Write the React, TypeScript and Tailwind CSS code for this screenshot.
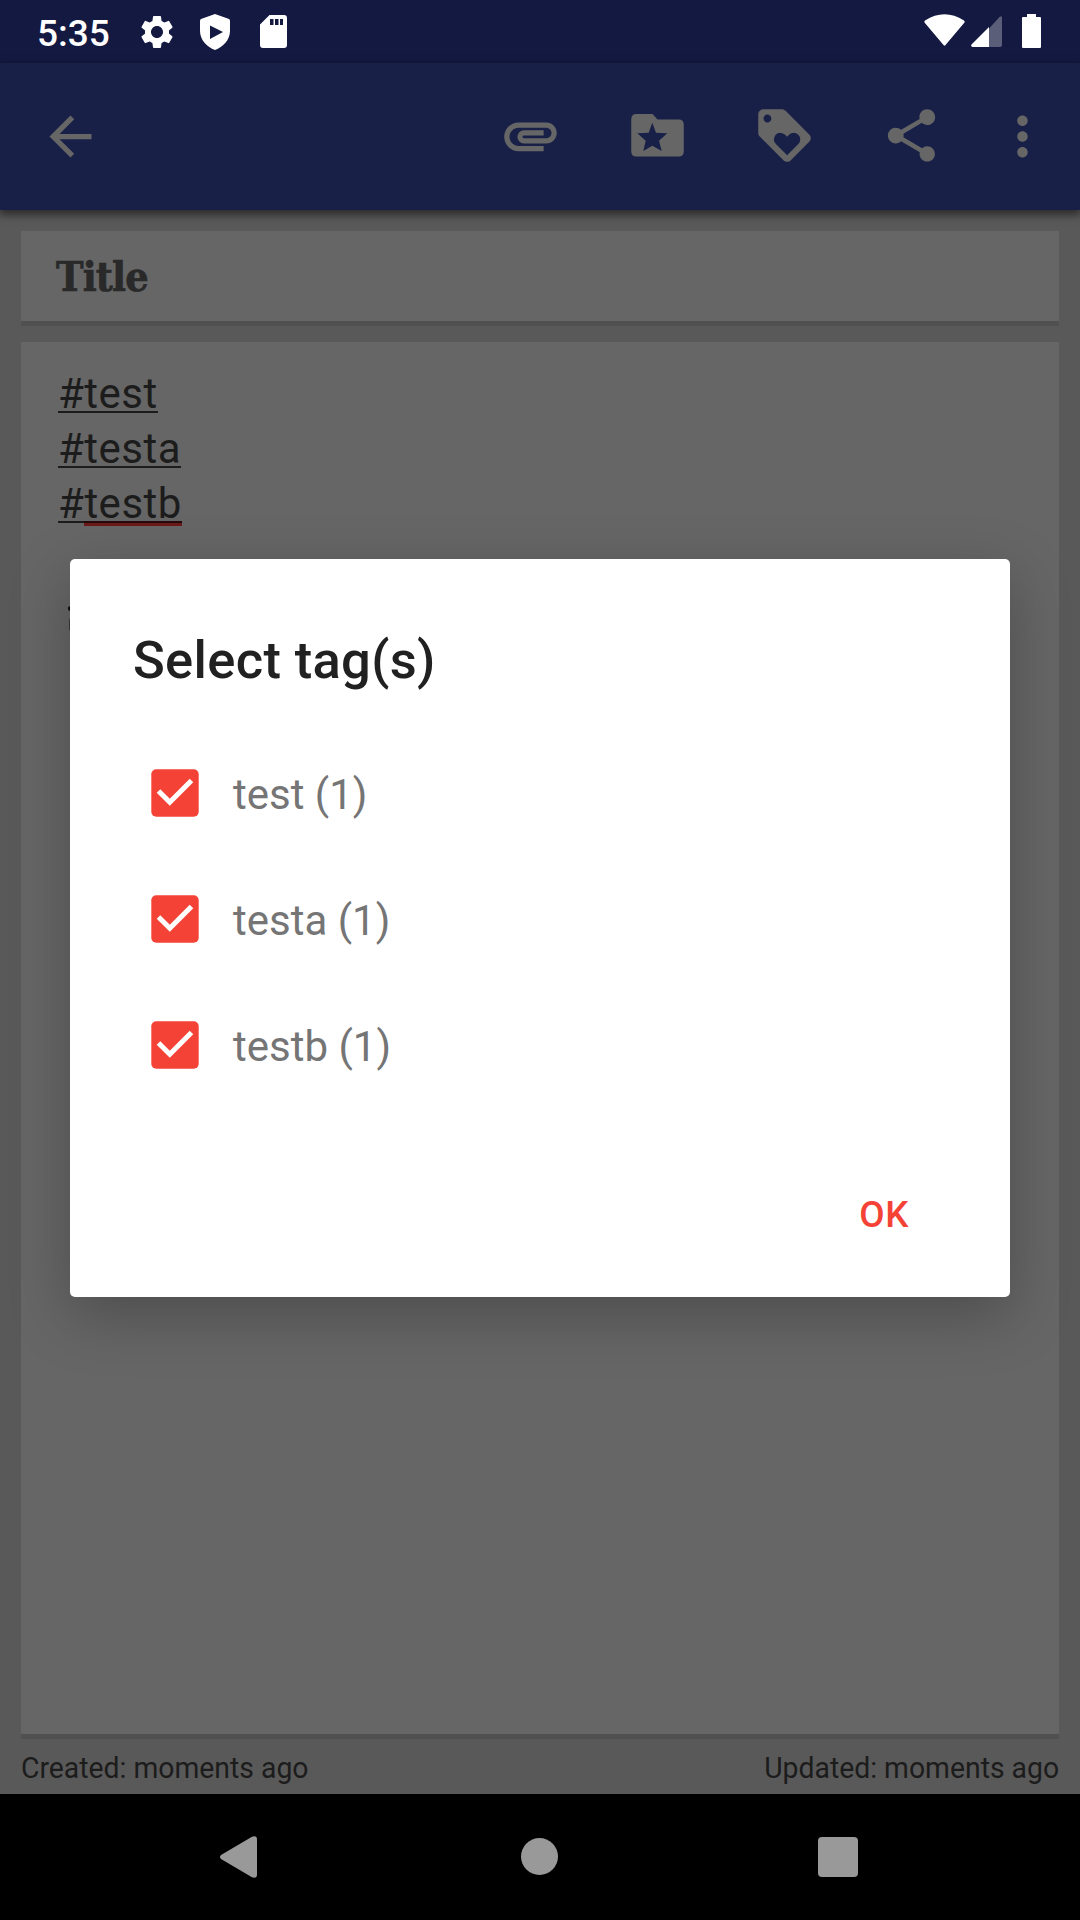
import type { ReactNode } from "react";
import { MdArrowBack, MdAttachment, MdLoyalty, MdMoreVert, MdSettings, MdShare } from "react-icons/md";

function StatusBar() {
  return (
    <div className="flex h-[63px] shrink-0 items-center bg-[#131940] text-white">
      <span className="ml-[37px] w-[100px] pt-[3px] text-[37px] font-medium leading-none">5:35</span>
      <MdSettings size={40} />
      <svg className="ml-[23px]" width="30" height="36" viewBox="0 0 30 36" fill="currentColor">
        <path fillRule="evenodd" d="M15 0L29 5Q30 5.500 30 7V17C30 26 23 33 15 36C7 33 0 26 0 17V7Q0 5.500 1 5ZM10 11.500V25L23 18Z" />
      </svg>
      <svg className="ml-[30px]" width="27" height="33" viewBox="0 0 27 33" fill="currentColor">
        <path fillRule="evenodd" d="M9.500 0H24Q27 0 27 3V30Q27 33 24 33H3Q0 33 0 30V9.500ZM10 4V10H13.500V4ZM15 4V10H18.500V4ZM20 4V10H23V4Z" />
      </svg>
      <svg className="mb-[3px] ml-auto" width="41" height="33" viewBox="0 0 41 33" fill="currentColor">
        <path d="M0.500 8.500Q0 7.500 1 6.500Q20.500 -6 40 6.500Q41 7.500 40.500 8.500L21.500 31Q20.500 32.300 19.500 31Z" />
      </svg>
      <svg className="ml-[6px]" width="31" height="31" viewBox="0 0 31 31" fill="currentColor">
        <path d="M18 12.500L28.500 1Q31 -1 31 2V29Q31 31 29 31H18Z" opacity=".3" />
        <path d="M18 11V31H1.500Q-0.500 30.500 0.500 28.500Z" />
      </svg>
      <svg className="mr-[39px] mb-px ml-[20px]" width="19" height="34" viewBox="0 0 19 34" fill="currentColor">
        <path d="M5 0H14V3H18Q19 3 19 4V33Q19 34 18 34H1Q0 34 0 33V4Q0 3 1 3H5Z" />
      </svg>
    </div>
  );
}

function FolderStar() {
  return (
    <svg width="63" height="63" viewBox="0 0 63 63" fill="currentColor">
      <path fillRule="evenodd" d="M10.250 10H26.500L31.500 15.500H52.500Q57.750 15.500 57.750 20.500V47.500Q57.750 52.500 52.500 52.500H10.250Q5.250 52.500 5.250 47.500V15.500Q5.250 10 10.250 10ZM26.300 18.700L22.700 28.700L11.300 29.300L19.700 36.700L17.300 47L26.300 41.700L35.700 47L33 36.700L41.300 29.300L30 28.700Z" />
    </svg>
  );
}

function Toolbar() {
  return (
    <div className="relative z-10 flex h-[147px] shrink-0 items-center bg-[#192048] pb-[2px] text-[#666666] shadow-[0_4px_8px_1px_rgba(0,0,0,0.5)]">
      <MdArrowBack className="mt-px ml-[39px]" size={63} />
      <div className="ml-auto flex items-center gap-[64px]">
        <MdAttachment size={63} />
        <FolderStar />
        <MdLoyalty size={63} />
        <MdShare size={63} />
      </div>
      <MdMoreVert className="mt-px mr-[26px] ml-[48px]" size={63} />
    </div>
  );
}

function Tag({ children }: { children: ReactNode }) {
  return (
    <div className="h-[55px] text-[42px] leading-[55px] tracking-[0.5px]">
      <span className="inline-block h-[47px] border-b-2 border-[#1c1c1c] leading-[55px]">{children}</span>
    </div>
  );
}

function Editor() {
  return (
    <div className="flex h-[1584px] shrink-0 flex-col bg-[#595959] px-[21px] pt-[21px] text-[#1c1c1c]">
      <div className="h-[95px] shrink-0 border-b-[5px] border-[#505050] bg-[#666666] pl-[35px] font-['DejaVu_Serif_Condensed','DejaVu_Serif',serif] text-[41px] font-bold leading-[92px] tracking-[-0.8px] text-[#292929] [-webkit-text-stroke:0.7px_#292929]">
        Title
      </div>
      <div className="relative mt-[16px] h-[1397px] shrink-0 border-b-[5px] border-[#505050] bg-[#666666] pt-[24px] pl-[37px]">
        <Tag>#test</Tag>
        <Tag>#testa</Tag>
        <Tag>
          #<span className="inline-block h-[47px] border-b-2 border-[#250c0c] shadow-[0_3px_0_#6b1818]">testb</span>
        </Tag>
        <div className="absolute top-[264px] left-[47px] h-[5px] w-[6px] rounded-full bg-[#0a0a0a]" />
        <div className="absolute top-[276px] left-[48px] h-[13px] w-[4px] rounded-full bg-[#3a3a3a]" />
      </div>
      <div className="flex justify-between pt-[11px] text-[30px] leading-[36px]">
        <span className="origin-left scale-x-[0.945]">Created: moments ago</span>
        <span className="origin-right scale-x-[0.945]">Updated: moments ago</span>
      </div>
    </div>
  );
}

function NavBar() {
  return (
    <div className="flex h-[126px] shrink-0 items-center bg-black text-[#999999]">
      <svg className="ml-[220px]" width="37" height="42" viewBox="0 0 37 42" fill="currentColor">
        <path d="M1 19L32 0.700Q37 -1 37 3.500V38.500Q37 43 32 41.300L1 23Q-1 21 1 19Z" />
      </svg>
      <div className="mb-px ml-[264px] size-[37px] rounded-full bg-[#999999]" />
      <div className="ml-[260px] size-[40px] rounded-[4px] bg-[#999999]" />
    </div>
  );
}

function Option({ label }: { label: string }) {
  return (
    <label className="flex h-[126px] items-center">
      <svg className="mr-[34px] ml-[81px]" width="48" height="48" viewBox="0 0 48 48">
        <rect x="0.300" y="0.300" width="47.400" height="47.400" rx="5" fill="#f44336" />
        <path d="M7.500 22L18.800 33.300L40.500 11.500" fill="none" stroke="#fff" strokeWidth="5" />
      </svg>
      <span className="pt-[3px] text-[42px] leading-none text-[#757575]">{label}</span>
    </label>
  );
}

function TagDialog() {
  return (
    <div className="absolute top-[559px] left-[70px] z-20 flex h-[738px] w-[940px] flex-col rounded-[5px] bg-white shadow-[0_18px_60px_rgba(0,0,0,0.25)]">
      <h1 className="pt-[70px] pl-[63px] text-[52.5px] font-medium leading-[62px] tracking-[0.33px] text-[#212121]">Select tag(s)</h1>
      <div className="mt-[39px]">
        <Option label="test (1)" />
        <Option label="testa (1)" />
        <Option label="testb (1)" />
      </div>
      <button className="mt-[87px] mr-[101px] self-end text-[36.75px] font-medium leading-[40px] tracking-[0.6px] text-[#f44336]">OK</button>
    </div>
  );
}

export default function App() {
  return (
    <div className="relative flex h-[1920px] w-[1080px] flex-col overflow-hidden font-[Roboto,sans-serif]">
      <StatusBar />
      <Toolbar />
      <Editor />
      <NavBar />
      <TagDialog />
    </div>
  );
}
